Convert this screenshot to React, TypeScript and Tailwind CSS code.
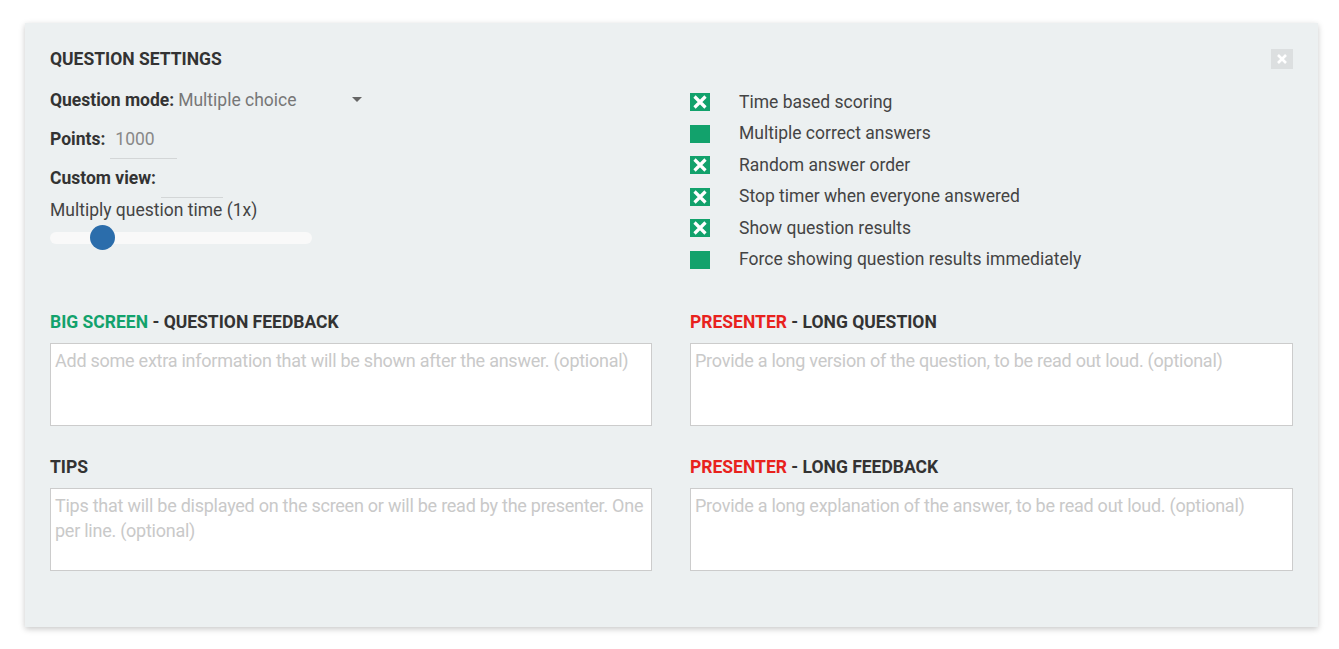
import React from "react";

const Check = ({ on }: { on: boolean }) => (
  <div className="w-[20px] h-[18px] bg-[#12a26c] shrink-0">
    {on && (
      <svg width="20" height="18" viewBox="0 0 20 18">
        <path d="M4.5 3.5 L15.5 14.5 M15.5 3.5 L4.5 14.5" stroke="white" strokeWidth="3.2" />
      </svg>
    )}
  </div>
);

const opts: [string, boolean][] = [
  ["Time based scoring", true],
  ["Multiple correct answers", false],
  ["Random answer order", true],
  ["Stop timer when everyone answered", true],
  ["Show question results", true],
  ["Force showing question results immediately", false],
];

const Area = ({ ph }: { ph: string }) => (
  <textarea
    placeholder={ph}
    className="w-full h-[83px] bg-white border border-[#cccccc] pl-[4px] pr-[1px] pt-[4px] pb-[2px] text-[18px] leading-[25px] tracking-[-0.25px] text-[#444] placeholder:text-[#c9c9c9] resize-none outline-none"
  />
);

const Heading = ({ children }: { children: React.ReactNode }) => (
  <div className="text-[17.5px] font-bold leading-[20px] text-[#333]">{children}</div>
);

export default function App() {
  return (
    <div className="w-[1339px] h-[649px] bg-white pt-[23px] pl-[25px]" style={{ fontFamily: "Roboto, 'Noto Sans', sans-serif" }}>
      <div className="w-[1293px] h-[604px] bg-[#ecf0f1] shadow-[0_2px_6px_rgba(0,0,0,0.22)] px-[25px] pt-[25px] relative">
        <button className="absolute right-[25px] top-[26px] w-[22px] h-[20px] bg-[#dcdfe0] flex items-center justify-center">
          <svg width="12" height="12" viewBox="0 0 12 12">
            <path d="M2 2 L10 10 M10 2 L2 10" stroke="white" strokeWidth="2.6" />
          </svg>
        </button>
        <div className="text-[17.5px] font-bold text-[#333] leading-[20px] mt-[1px]">QUESTION SETTINGS</div>
        <div className="grid grid-cols-[602px_1fr] gap-x-[38px] mt-[19px]">
          <div className="text-[17.5px] text-[#333]">
            <div className="flex items-center h-[24px]">
              <span className="font-bold">Question mode:</span>
              <div className="ml-[4px] w-[186px] flex items-center justify-between text-[#777]">
                <span>Multiple choice</span>
                <svg width="10" height="6" viewBox="0 0 10 6" className="mr-[2px]">
                  <path d="M0 0 H10 L5 5 Z" fill="#666" />
                </svg>
              </div>
            </div>
            <div className="flex items-start mt-[15px]">
              <span className="font-bold leading-[24px]">Points:</span>
              <div className="ml-[5px] w-[62px] h-[24px] leading-[24px] pl-[5px] text-[#888] border-b border-[#d3d6d7] pb-[7px] box-content">
                1000
              </div>
            </div>
            <div className="flex items-start mt-[7px]">
              <span className="font-bold leading-[24px]">Custom view:</span>
              <div className="ml-[5px] w-[62px] h-[24px] border-b border-[#d3d6d7] pb-[7px] box-content" />
            </div>
            <div className="h-[24px] text-[#444] flex items-center">Multiply question time (1x)</div>
            <div className="relative mt-[10px] w-[262px] h-[12px] rounded-full bg-[#f9f9f9]">
              <div className="absolute left-[40px] top-[-7px] w-[25px] h-[25px] rounded-full bg-[#2b6dab]" />
            </div>
          </div>
          <div className="flex flex-col gap-[13.5px] pt-[5px]">
            {opts.map(([t, on]) => (
              <div key={t} className="flex items-center h-[18px]">
                <Check on={on} />
                <span className="ml-[29px] text-[17.5px] text-[#444]">{t}</span>
              </div>
            ))}
          </div>
        </div>
        <div className="grid grid-cols-[602px_1fr] gap-x-[38px] mt-[43px]">
          <div>
            <Heading>
              <span className="text-[#12a26c]">BIG SCREEN</span> - QUESTION FEEDBACK
            </Heading>
            <div className="mt-[11px]">
              <Area ph="Add some extra information that will be shown after the answer. (optional)" />
            </div>
          </div>
          <div>
            <Heading>
              <span className="text-[#e8221d]">PRESENTER</span> - LONG QUESTION
            </Heading>
            <div className="mt-[11px]">
              <Area ph="Provide a long version of the question, to be read out loud. (optional)" />
            </div>
          </div>
          <div className="mt-[24px]">
            <Heading>TIPS</Heading>
            <div className="mt-[11px]">
              <Area ph="Tips that will be displayed on the screen or will be read by the presenter. One per line. (optional)" />
            </div>
          </div>
          <div className="mt-[24px]">
            <Heading>
              <span className="text-[#e8221d]">PRESENTER</span> - LONG FEEDBACK
            </Heading>
            <div className="mt-[11px]">
              <Area ph="Provide a long explanation of the answer, to be read out loud. (optional)" />
            </div>
          </div>
        </div>
      </div>
    </div>
  );
}
